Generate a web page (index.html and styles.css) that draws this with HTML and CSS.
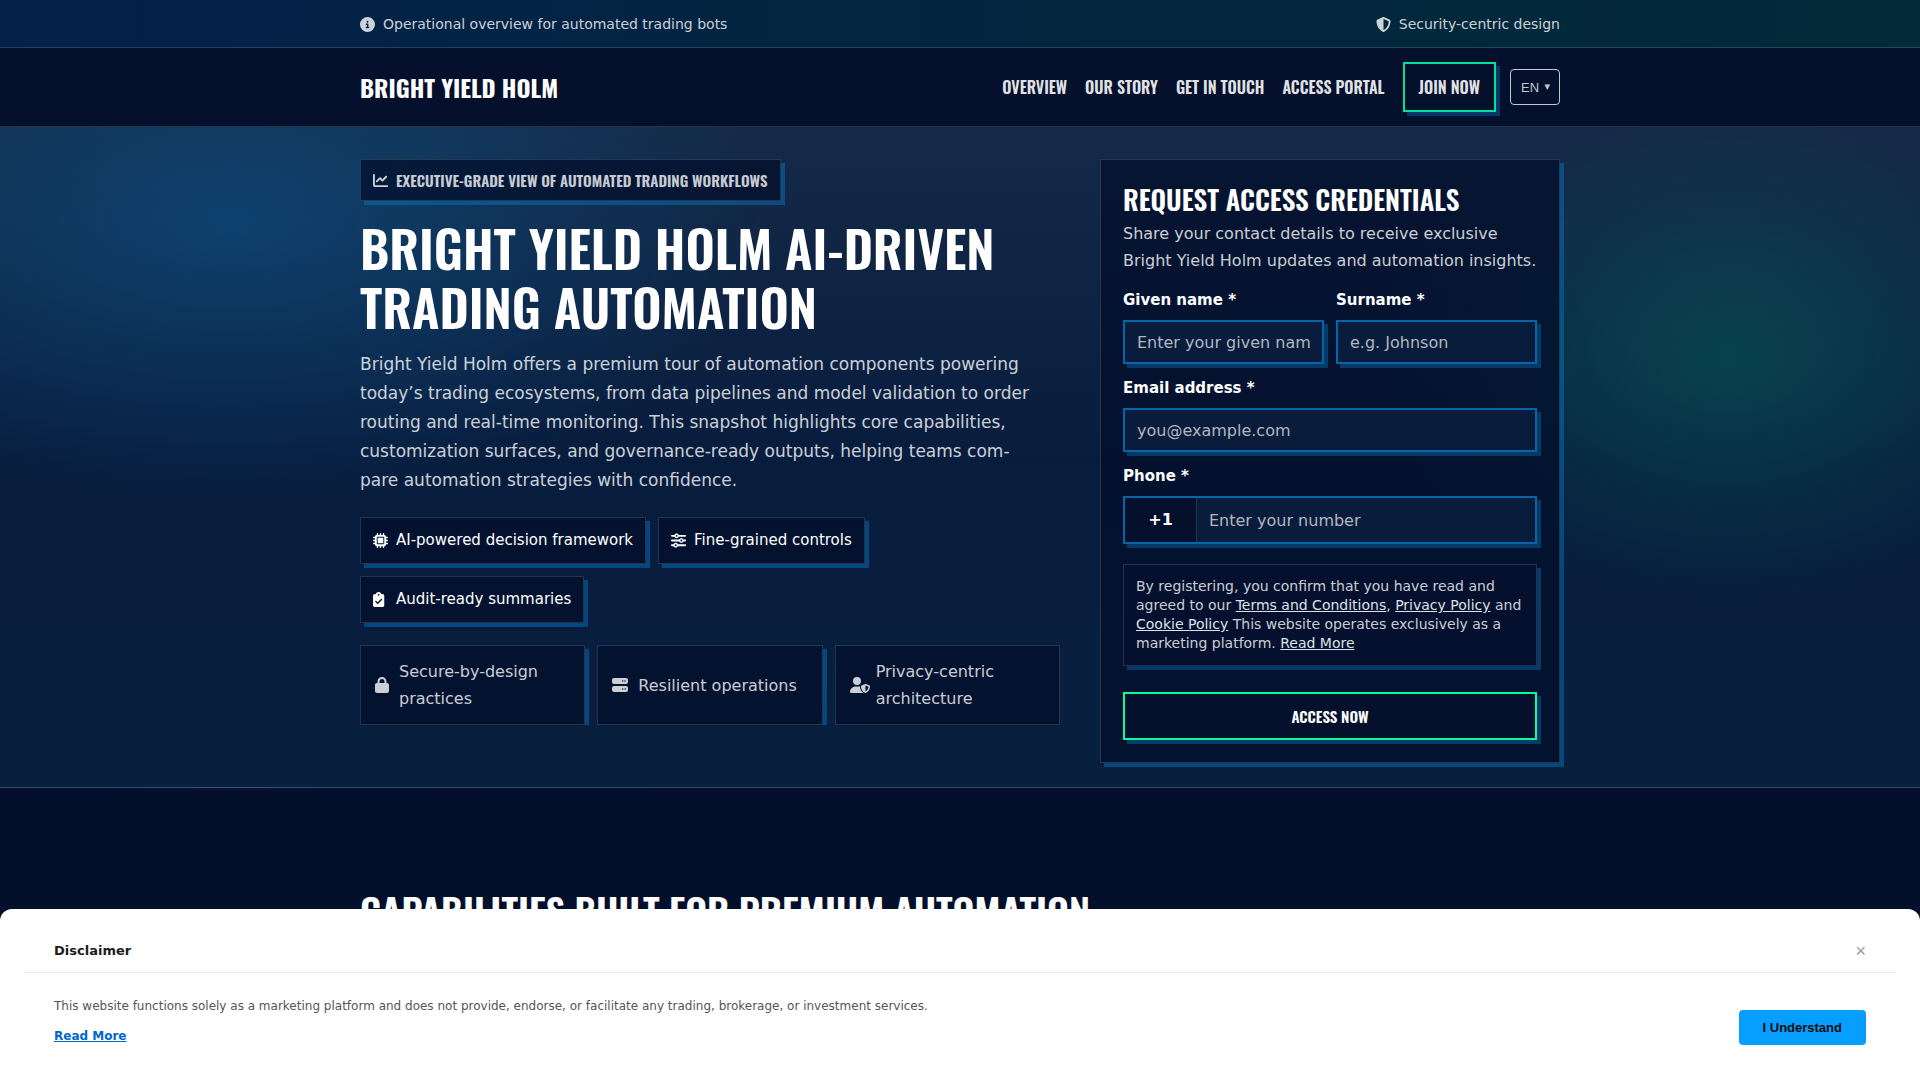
FILE: index.html
```
<!DOCTYPE html>
<html lang="en">
<head>
    <meta charset="UTF-8">
    <meta name="viewport" content="width=device-width, initial-scale=1.0">
    <title>Bright Yield Holm</title>
    <link rel="stylesheet" href="styles.css">
</head>

<body>
    <div class="topbar">
      <div class="container topbar-inner">
        <span class="topbar-item">
          <svg class="icon" viewBox="0 0 512 512"><path d="M256 512A256 256 0 1 0 256 0a256 256 0 1 0 0 512zM216 336h24V272H216c-13.3 0-24-10.7-24-24s10.7-24 24-24h48c13.3 0 24 10.7 24 24v88h8c13.3 0 24 10.7 24 24s-10.7 24-24 24H216c-13.3 0-24-10.7-24-24s10.7-24 24-24zm40-208a32 32 0 1 1 0 64 32 32 0 1 1 0-64z"/></svg>
          Operational overview for automated trading bots
        </span>
        <span class="topbar-item">
          <svg class="icon" viewBox="0 0 512 512"><path d="M256 0c4.6 0 9.2 1 13.4 2.9L457.7 82.8c22 9.3 38.4 31 38.3 57.2c-.5 99.2-41.3 280.7-213.6 363.2c-16.7 8-36.1 8-52.8 0C57.3 420.7 16.5 239.2 16 140c-.1-26.2 16.3-47.9 38.3-57.2L242.7 2.9C246.8 1 251.4 0 256 0zm0 66.8V444.8C394 378 431.1 230.1 432 141.4L256 66.8l0 0z"/></svg>
          Security-centric design
        </span>
      </div>
    </div>

    <header class="header">
      <div class="container header-inner">
        <a class="brand" href="#">Bright Yield Holm</a>
        <nav class="nav">
          <a href="#">Overview</a>
          <a href="#">Our Story</a>
          <a href="#">Get in Touch</a>
          <a href="#">Access Portal</a>
          <a class="nav-cta" href="#signup">Join Now</a>
          <div class="lang">
            <select aria-label="Language">
              <option>EN</option>
            </select>
          </div>
        </nav>
      </div>
    </header>

    <main>
      <section class="hero">
        <div class="container hero-grid">
          <div class="hero-copy">
            <div class="badge">
              <svg class="icon" viewBox="0 0 512 512"><path d="M64 64c0-17.7-14.3-32-32-32S0 46.3 0 64V400c0 44.2 35.8 80 80 80H480c17.7 0 32-14.3 32-32s-14.3-32-32-32H80c-8.8 0-16-7.2-16-16V64zm406.6 86.6c12.5-12.5 12.5-32.8 0-45.3s-32.8-12.5-45.3 0L320 210.7l-57.4-57.4c-12.5-12.5-32.8-12.5-45.3 0l-112 112c-12.5 12.5-12.5 32.8 0 45.3s32.8 12.5 45.3 0L240 221.3l57.4 57.4c12.5 12.5 32.8 12.5 45.3 0l128-128z"/></svg>
              Executive-grade view of automated trading workflows
            </div>
            <h1>Bright Yield Holm AI-driven trading automation</h1>
            <p class="lead">Bright Yield Holm offers a premium tour of automation components powering today’s trading ecosystems, from data pipelines and model validation to order routing and real-time monitoring. This snapshot highlights core capabilities, customization surfaces, and governance-ready outputs, helping teams com&shy;pare automation strategies with confidence.</p>
            <ul class="chips">
              <li>
                <svg class="icon" viewBox="0 0 512 512"><path d="M176 24c0-13.3-10.7-24-24-24s-24 10.7-24 24V64c-35.3 0-64 28.7-64 64H24c-13.3 0-24 10.7-24 24s10.7 24 24 24H64v56H24c-13.3 0-24 10.7-24 24s10.7 24 24 24H64v56H24c-13.3 0-24 10.7-24 24s10.7 24 24 24H64c0 35.3 28.7 64 64 64v40c0 13.3 10.7 24 24 24s24-10.7 24-24V448h56v40c0 13.3 10.7 24 24 24s24-10.7 24-24V448h56v40c0 13.3 10.7 24 24 24s24-10.7 24-24V448c35.3 0 64-28.7 64-64h40c13.3 0 24-10.7 24-24s-10.7-24-24-24H448V280h40c13.3 0 24-10.7 24-24s-10.7-24-24-24H448V176h40c13.3 0 24-10.7 24-24s-10.7-24-24-24H448c0-35.3-28.7-64-64-64V24c0-13.3-10.7-24-24-24s-24 10.7-24 24V64H280V24c0-13.3-10.7-24-24-24s-24 10.7-24 24V64H176V24zM160 128H352c17.7 0 32 14.3 32 32V352c0 17.7-14.3 32-32 32H160c-17.7 0-32-14.3-32-32V160c0-17.7 14.3-32 32-32zm192 32H160V352H352V160z"/></svg>
                AI-powered decision framework
              </li>
              <li>
                <svg class="icon" viewBox="0 0 512 512"><path d="M0 416c0 17.7 14.3 32 32 32l54.7 0c12.3 28.3 40.5 48 73.3 48s61-19.7 73.3-48L480 448c17.7 0 32-14.3 32-32s-14.3-32-32-32l-246.7 0c-12.3-28.3-40.5-48-73.3-48s-61 19.7-73.3 48L32 384c-17.7 0-32 14.3-32 32zm128 0a32 32 0 1 1 64 0 32 32 0 1 1 -64 0zM320 256a32 32 0 1 1 64 0 32 32 0 1 1 -64 0zm32-80c-32.8 0-61 19.7-73.3 48L32 224c-17.7 0-32 14.3-32 32s14.3 32 32 32l246.7 0c12.3 28.3 40.5 48 73.3 48s61-19.7 73.3-48l54.7 0c17.7 0 32-14.3 32-32s-14.3-32-32-32l-54.7 0c-12.3-28.3-40.5-48-73.3-48zM192 128a32 32 0 1 1 0-64 32 32 0 1 1 0 64zm73.3-64C253 35.7 224.8 16 192 16s-61 19.7-73.3 48L32 64C14.3 64 0 78.3 0 96s14.3 32 32 32l86.7 0c12.3 28.3 40.5 48 73.3 48s61-19.7 73.3-48L480 128c17.7 0 32-14.3 32-32s-14.3-32-32-32L265.3 64z"/></svg>
                Fine-grained controls
              </li>
              <li>
                <svg class="icon" viewBox="0 0 512 512"><path d="M192 0c-41.8 0-77.4 26.7-90.5 64H64C28.7 64 0 92.7 0 128V448c0 35.3 28.7 64 64 64H320c35.3 0 64-28.7 64-64V128c0-35.3-28.7-64-64-64H282.5C269.4 26.7 233.8 0 192 0zm0 64a32 32 0 1 1 0 64 32 32 0 1 1 0-64zM305 273L177 401c-9.4 9.4-24.6 9.4-33.9 0L79 337c-9.4-9.4-9.4-24.6 0-33.9s24.6-9.4 33.9 0l47 47L271 239c9.4-9.4 24.6-9.4 33.9 0s9.4 24.6 0 33.9z"/></svg>
                Audit-ready summaries
              </li>
            </ul>
            <ul class="trust">
              <li>
                <svg class="icon icon-narrow" viewBox="0 0 448 512"><path d="M144 144v48H304V144c0-44.2-35.8-80-80-80s-80 35.8-80 80zM80 192V144C80 64.5 144.5 0 224 0s144 64.5 144 144v48h16c35.3 0 64 28.7 64 64V448c0 35.3-28.7 64-64 64H64c-35.3 0-64-28.7-64-64V256c0-35.3 28.7-64 64-64H80z"/></svg>
                <span>Secure-by-design practices</span>
              </li>
              <li>
                <svg class="icon" viewBox="0 0 512 512"><path d="M64 32C28.7 32 0 60.7 0 96v64c0 35.3 28.7 64 64 64H448c35.3 0 64-28.7 64-64V96c0-35.3-28.7-64-64-64H64zm280 72a24 24 0 1 1 0 48 24 24 0 1 1 0-48zm48 24a24 24 0 1 1 48 0 24 24 0 1 1 -48 0zM64 288c-35.3 0-64 28.7-64 64v64c0 35.3 28.7 64 64 64H448c35.3 0 64-28.7 64-64V352c0-35.3-28.7-64-64-64H64zm280 72a24 24 0 1 1 0 48 24 24 0 1 1 0-48zm56 24a24 24 0 1 1 48 0 24 24 0 1 1 -48 0z"/></svg>
                <span>Resilient operations</span>
              </li>
              <li>
                <svg class="icon" viewBox="0 0 512 512"><path d="M224 256A128 128 0 1 0 224 0a128 128 0 1 0 0 256zm-45.7 48C79.8 304 0 383.8 0 482.3C0 498.7 13.3 512 29.7 512H418.3c1.8 0 3.5-.2 5.3-.5c-76.3-55.1-99.8-141-103.1-200.2c-16.1-4.8-33.1-7.3-50.7-7.3H178.3zm308.8-78.3l-120 48C358 277.4 352 286.2 352 296c0 63.3 25.9 168.8 134.8 214.2c5.9 2.5 12.6 2.5 18.5 0C614.1 464.8 640 359.3 640 296c0-9.8-6-18.6-15.1-22.3l-120-48c-5.7-2.3-12.1-2.3-17.8 0zM591.4 312c-3.9 50.7-27.2 116.7-95.4 149.7V273.8L591.4 312z"/></svg>
                <span>Privacy-centric architecture</span>
              </li>
            </ul>
          </div>

          <form class="panel" id="signup">
            <h2>Request access credentials</h2>
            <p class="panel-text">Share your contact details to receive exclusive Bright Yield Holm updates and automation insights.</p>
            <div class="fields">
              <div class="field">
                <label for="first-name">Given name *</label>
                <input type="text" id="first-name" placeholder="Enter your given name" required>
              </div>
              <div class="field">
                <label for="last-name">Surname *</label>
                <input type="text" id="last-name" placeholder="e.g. Johnson" required>
              </div>
              <div class="field field-full">
                <label for="email">Email address *</label>
                <input type="email" id="email" placeholder="you@example.com" required>
              </div>
              <div class="field field-full">
                <label for="phone">Phone *</label>
                <div class="phone">
                  <span class="phone-code">+1</span>
                  <input type="tel" id="phone" placeholder="Enter your number" required>
                </div>
              </div>
            </div>
            <p class="consent">By registering, you confirm that you have read and agreed to our <a href="#">Terms and Conditions</a>, <a href="#">Privacy Policy</a> and <a href="#">Cookie Policy</a> This website operates exclusively as a marketing platform. <a href="#">Read More</a></p>
            <button class="submit" type="submit">Access Now</button>
          </form>
        </div>
      </section>

      <section class="features">
        <div class="container">
          <h2>Capabilities built for premium automation</h2>
        </div>
      </section>
    </main>

    <div class="disclaimer">
      <div class="disclaimer-head">
        <strong>Disclaimer</strong>
        <button class="disclaimer-close" type="button" aria-label="Close">×</button>
      </div>
      <div class="disclaimer-body">
        <div>
          <p>This website functions solely as a marketing platform and does not provide, endorse, or facilitate any trading, brokerage, or investment services.</p>
          <a href="#">Read More</a>
        </div>
        <button class="disclaimer-ok" type="button">I Understand</button>
      </div>
    </div>
</body>
</html>
```
FILE: styles.css
```
:root {
    --heading: "Oswald", "Liberation Sans Narrow", "DejaVu Sans Condensed", sans-serif;
    --body: "DejaVu Sans", sans-serif;
    --line: rgba(255, 255, 255, 0.14);
    --shadow: 4px 4px 0 rgba(0, 125, 205, 0.45);
    --box: rgba(2, 13, 42, 0.7);
    --muted: rgba(255, 255, 255, 0.8);
}

* {
    margin: 0;
    padding: 0;
    box-sizing: border-box;
}

body {
    background: #040f2c;
    color: #fff;
    font-family: var(--body);
    font-size: 16px;
    line-height: 27px;
    height: 100vh;
    overflow: hidden;
}

ul {
    list-style: none;
}

.container {
    max-width: 1248px;
    margin: 0 auto;
    padding: 0 24px;
}

.icon {
    width: 16px;
    height: 16px;
    fill: currentColor;
    flex: none;
    overflow: visible;
}

.icon-narrow {
    width: 14px;
}

/* Top bar */
.topbar {
    background: linear-gradient(90deg, #04214a, #022540 45%, #022a38);
    border-bottom: 1px solid var(--line);
    color: var(--muted);
    font-size: 14px;
    line-height: 23px;
    padding: 13px 0 11px;
}

.topbar-inner,
.header-inner {
    display: flex;
    justify-content: space-between;
    align-items: center;
}

.topbar-item {
    display: flex;
    align-items: center;
    gap: 8px;
}

.topbar-item .icon {
    width: 15px;
    height: 15px;
}

/* Header */
.header {
    background: #05102d;
    border-bottom: 1px solid var(--line);
    padding: 14px 0;
}

.brand {
    color: #fff;
    font: 700 24px/36px var(--heading);
    text-transform: uppercase;
    text-decoration: none;
}

.nav {
    display: flex;
    align-items: center;
    gap: 18px;
}

.nav a {
    color: rgba(255, 255, 255, 0.9);
    font: 600 16px/26px var(--heading);
    text-transform: uppercase;
    text-decoration: none;
}

.nav .nav-cta {
    border: 2px solid #00e29a;
    box-shadow: 4px 4px 0 #05386a;
    padding: 10px 14px;
}

.lang {
    position: relative;
    margin-left: -4px;
}

.lang select {
    display: block;
    appearance: none;
    background: none;
    border: 1px solid #c4c8d0;
    border-radius: 4px;
    color: #c4c8d0;
    font: 13px "Liberation Sans", sans-serif;
    width: 50px;
    height: 36px;
    padding: 0 10px;
}

.lang::after {
    content: "▾";
    position: absolute;
    right: 10px;
    top: 4px;
    color: #c4c8d0;
    font-size: 11px;
    pointer-events: none;
}

/* Hero */
.hero {
    background:
        radial-gradient(540px 280px at 12% 14%, rgba(10, 92, 150, 0.5), transparent 100%),
        radial-gradient(350px 240px at 90% 35%, rgba(5, 100, 90, 0.5), transparent 100%),
        linear-gradient(180deg, #152a48, #081d3e 50%, #091f3e);
    border-bottom: 1px solid var(--line);
    padding: 32px 0 24px;
}

.hero-grid {
    display: grid;
    grid-template-columns: 35fr 23fr;
    gap: 40px;
    align-items: start;
}

.badge {
    display: inline-flex;
    align-items: center;
    gap: 8px;
    background: var(--box);
    border: 1px solid var(--line);
    box-shadow: var(--shadow);
    color: var(--muted);
    font: 600 15px/24px var(--heading);
    text-transform: uppercase;
    padding: 8px 12px;
    vertical-align: top;
}

.badge .icon {
    width: 15px;
    height: 15px;
}

h1 {
    font: 600 51px/59px var(--heading);
    text-transform: uppercase;
    margin: 17px 0 14px;
}

.lead {
    color: var(--muted);
    font-size: 17px;
    line-height: 29px;
    max-width: 672px;
}

.chips {
    display: flex;
    flex-wrap: wrap;
    gap: 12px;
    margin: 22px 0;
}

.chips li {
    display: flex;
    align-items: center;
    gap: 8px;
    background: var(--box);
    border: 1px solid var(--line);
    box-shadow: var(--shadow);
    font-size: 15px;
    line-height: 25px;
    padding: 10px 12px;
}

.chips .icon {
    width: 15px;
    height: 15px;
}

.trust {
    display: grid;
    grid-template-columns: repeat(3, 1fr);
    gap: 12px;
    overflow: hidden;
}

.trust li {
    display: flex;
    align-items: center;
    gap: 10px;
    background: var(--box);
    border: 1px solid var(--line);
    box-shadow: var(--shadow);
    color: var(--muted);
    padding: 12px 14px;
}

/* Sign-up form */
.panel {
    background: var(--box);
    border: 1px solid var(--line);
    box-shadow: var(--shadow);
    padding: 22px;
}

.panel h2 {
    font: 600 27px/34px var(--heading);
    text-transform: uppercase;
    margin-bottom: 4px;
}

.panel-text {
    color: var(--muted);
    margin-bottom: 14px;
}

.fields {
    display: grid;
    grid-template-columns: 1fr 1fr;
    gap: 12px;
}

.field {
    min-width: 0;
}

.field-full {
    grid-column: 1 / -1;
}

.field label {
    display: block;
    font-size: 15px;
    font-weight: 700;
    line-height: 24px;
    margin-bottom: 8px;
}

.field input {
    width: 100%;
    height: 44px;
    background: #091c3b;
    border: 2px solid #0565a6;
    box-shadow: 4px 4px 0 #053a69;
    color: #fff;
    font: 16px var(--body);
    padding: 0 12px;
}

.field input::placeholder {
    color: #b1b7c1;
}

.phone {
    display: flex;
    height: 48px;
    background: #091c3b;
    border: 2px solid #0565a6;
    box-shadow: 4px 4px 0 #053a69;
}

.phone-code {
    width: 72px;
    background: #05102d;
    border-right: 1px solid var(--line);
    font-weight: 700;
    line-height: 44px;
    text-align: center;
}

.phone input {
    flex: 1;
    min-width: 0;
    background: none;
    border: 0;
    box-shadow: none;
}

.consent {
    background: #04102d;
    border: 1px solid var(--line);
    box-shadow: 4px 4px 0 #053a69;
    color: var(--muted);
    font-size: 14px;
    line-height: 19px;
    margin: 20px 0 26px;
    padding: 12px;
}

.consent a {
    color: #dfe2e8;
}

.submit {
    width: 100%;
    height: 48px;
    background: #05102d;
    border: 2px solid #00ff9d;
    box-shadow: 4px 4px 0 #053a69;
    color: #fff;
    font: 600 15px var(--heading);
    text-transform: uppercase;
}

/* Features */
.features {
    padding: 96px 0;
}

.features h2 {
    font: 600 38px/52px var(--heading);
    text-transform: uppercase;
}

/* Disclaimer */
.disclaimer {
    position: fixed;
    left: 0;
    right: 0;
    bottom: 0;
    background: #fff;
    border-radius: 12px 12px 0 0;
    color: #555;
    font-size: 12px;
    line-height: 18px;
    padding: 24px 24px 35px;
}

.disclaimer-head {
    display: flex;
    justify-content: space-between;
    align-items: center;
    border-bottom: 1px solid #e9e9e9;
    padding: 9px 30px 12px;
}

.disclaimer-head strong {
    color: #1c1c1c;
    font-size: 13px;
}

.disclaimer-close {
    background: none;
    border: 0;
    color: #999;
    font: 18px/18px "Liberation Sans", sans-serif;
}

.disclaimer-body {
    display: flex;
    justify-content: space-between;
    align-items: flex-end;
    padding: 24px 30px 0;
}

.disclaimer-body p {
    margin-bottom: 12px;
}

.disclaimer-body a {
    color: #0066cc;
    font-weight: 700;
}

.disclaimer-ok {
    background: #079fff;
    border: 0;
    border-radius: 4px;
    color: #0b0b0b;
    font: 700 13px "Liberation Sans", sans-serif;
    height: 35px;
    padding: 0 24px;
}
```
